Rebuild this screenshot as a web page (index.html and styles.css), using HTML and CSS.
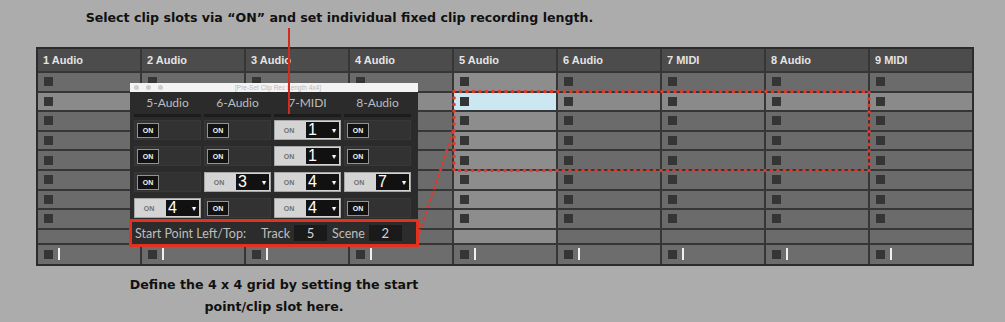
FILE: index.html
```html
<!DOCTYPE html>
<html lang="en">
<head>
    <meta charset="UTF-8">
    <meta name="viewport" content="width=device-width, initial-scale=1.0">
    <title>Pre-Set Clip Rec Length 4x4</title>
    <link rel="stylesheet" href="styles.css">
</head>
<body>
<div class="page">
    <p class="note note-top">Select clip slots via “ON” and set individual fixed clip recording length.</p>

    <div class="session">
        <div class="track">
            <div class="track-name">1 Audio</div>
            <div class="slot"><i></i></div>
            <div class="slot scene"><i></i></div>
            <div class="slot"><i></i></div>
            <div class="slot"><i></i></div>
            <div class="slot"><i></i></div>
            <div class="slot"><i></i></div>
            <div class="slot"><i></i></div>
            <div class="slot"><i></i></div>
            <div class="slot empty"></div>
            <div class="slot stop"><i></i><b></b></div>
        </div>
        <div class="track">
            <div class="track-name">2 Audio</div>
            <div class="slot"><i></i></div>
            <div class="slot scene"><i></i></div>
            <div class="slot"><i></i></div>
            <div class="slot"><i></i></div>
            <div class="slot"><i></i></div>
            <div class="slot"><i></i></div>
            <div class="slot"><i></i></div>
            <div class="slot"><i></i></div>
            <div class="slot empty"></div>
            <div class="slot stop"><i></i><b></b></div>
        </div>
        <div class="track">
            <div class="track-name">3 Audio</div>
            <div class="slot"><i></i></div>
            <div class="slot scene"><i></i></div>
            <div class="slot"><i></i></div>
            <div class="slot"><i></i></div>
            <div class="slot"><i></i></div>
            <div class="slot"><i></i></div>
            <div class="slot"><i></i></div>
            <div class="slot"><i></i></div>
            <div class="slot empty"></div>
            <div class="slot stop"><i></i><b></b></div>
        </div>
        <div class="track">
            <div class="track-name">4 Audio</div>
            <div class="slot"><i></i></div>
            <div class="slot scene"><i></i></div>
            <div class="slot"><i></i></div>
            <div class="slot"><i></i></div>
            <div class="slot"><i></i></div>
            <div class="slot"><i></i></div>
            <div class="slot"><i></i></div>
            <div class="slot"><i></i></div>
            <div class="slot empty"></div>
            <div class="slot stop"><i></i><b></b></div>
        </div>
        <div class="track selected">
            <div class="track-name">5 Audio</div>
            <div class="slot"><i></i></div>
            <div class="slot picked"><i></i></div>
            <div class="slot"><i></i></div>
            <div class="slot"><i></i></div>
            <div class="slot"><i></i></div>
            <div class="slot"><i></i></div>
            <div class="slot"><i></i></div>
            <div class="slot"><i></i></div>
            <div class="slot empty"></div>
            <div class="slot stop"><i></i><b></b></div>
        </div>
        <div class="track">
            <div class="track-name">6 Audio</div>
            <div class="slot"><i></i></div>
            <div class="slot scene"><i></i></div>
            <div class="slot"><i></i></div>
            <div class="slot"><i></i></div>
            <div class="slot"><i></i></div>
            <div class="slot"><i></i></div>
            <div class="slot"><i></i></div>
            <div class="slot"><i></i></div>
            <div class="slot empty"></div>
            <div class="slot stop"><i></i><b></b></div>
        </div>
        <div class="track">
            <div class="track-name">7 MIDI</div>
            <div class="slot"><i></i></div>
            <div class="slot scene"><i></i></div>
            <div class="slot"><i></i></div>
            <div class="slot"><i></i></div>
            <div class="slot"><i></i></div>
            <div class="slot"><i></i></div>
            <div class="slot"><i></i></div>
            <div class="slot"><i></i></div>
            <div class="slot empty"></div>
            <div class="slot stop"><i></i><b></b></div>
        </div>
        <div class="track">
            <div class="track-name">8 Audio</div>
            <div class="slot"><i></i></div>
            <div class="slot scene"><i></i></div>
            <div class="slot"><i></i></div>
            <div class="slot"><i></i></div>
            <div class="slot"><i></i></div>
            <div class="slot"><i></i></div>
            <div class="slot"><i></i></div>
            <div class="slot"><i></i></div>
            <div class="slot empty"></div>
            <div class="slot stop"><i></i><b></b></div>
        </div>
        <div class="track">
            <div class="track-name">9 MIDI</div>
            <div class="slot"><i></i></div>
            <div class="slot scene"><i></i></div>
            <div class="slot"><i></i></div>
            <div class="slot"><i></i></div>
            <div class="slot"><i></i></div>
            <div class="slot"><i></i></div>
            <div class="slot"><i></i></div>
            <div class="slot"><i></i></div>
            <div class="slot empty"></div>
            <div class="slot stop"><i></i><b></b></div>
        </div>
    </div>

    <p class="note note-bottom">Define the 4 x 4 grid by setting the start<br>point/clip slot here.</p>

    <!-- device window floating over the session view -->
    <div class="device">
        <div class="device-bar">
            <span class="lights"><i></i><i></i><i></i></span>
            <span class="device-title">[Pre-Set Clip Rec Length 4x4]</span>
        </div>
        <div class="device-body">
            <div class="lanes lane-names">
                <div>5-Audio</div>
                <div>6-Audio</div>
                <div>7-MIDI</div>
                <div>8-Audio</div>
            </div>
            <div class="lanes lane-rules">
                <div></div><div></div><div></div><div></div>
            </div>
            <div class="lanes cells">
                <div class="cell"><span class="on">ON</span></div>
                <div class="cell"><span class="on">ON</span></div>
                <div class="cell armed"><span class="on">ON</span><span class="len">1<em>▾</em></span></div>
                <div class="cell"><span class="on">ON</span></div>

                <div class="cell"><span class="on">ON</span></div>
                <div class="cell"><span class="on">ON</span></div>
                <div class="cell armed"><span class="on">ON</span><span class="len">1<em>▾</em></span></div>
                <div class="cell"><span class="on">ON</span></div>

                <div class="cell"><span class="on">ON</span></div>
                <div class="cell armed"><span class="on">ON</span><span class="len">3<em>▾</em></span></div>
                <div class="cell armed"><span class="on">ON</span><span class="len">4<em>▾</em></span></div>
                <div class="cell armed"><span class="on">ON</span><span class="len">7<em>▾</em></span></div>

                <div class="cell armed"><span class="on">ON</span><span class="len">4<em>▾</em></span></div>
                <div class="cell"><span class="on">ON</span></div>
                <div class="cell armed"><span class="on">ON</span><span class="len">4<em>▾</em></span></div>
                <div class="cell"><span class="on">ON</span></div>
            </div>
        </div>
        <div class="start">
            <span>Start Point Left/Top:</span>
            <span class="start-track">Track</span>
            <span class="num">5</span>
            <span class="start-scene">Scene</span>
            <span class="num">2</span>
        </div>
    </div>

    <!-- callout lines and the 4x4 target range -->
    <svg class="marks" width="1005" height="322" viewBox="0 0 1005 322">
        <line x1="289" y1="28" x2="289" y2="114" stroke="#d42a1e" stroke-width="2"/>
        <rect x="454" y="91.5" width="415" height="79" fill="none" stroke="#e0392a" stroke-width="3.6" stroke-linecap="round" stroke-dasharray="0 6.5"/>
        <line x1="420" y1="231" x2="453" y2="132" stroke="#e0392a" stroke-width="3.6" stroke-linecap="round" stroke-dasharray="0 6.5"/>
    </svg>
</div>
</body>
</html>
```

FILE: styles.css
```css
body {
    margin: 0;
    background-color: #acacac;
    font-family: "Lato", "Liberation Sans", sans-serif;
}
.page {
    position: relative;
    width: 1005px;
    height: 322px;
    overflow: hidden;
}
.note {
    margin: 0;
    font-family: "DejaVu Sans", sans-serif;
    font-weight: bold;
    font-size: 12.6px;
    color: #111;
    text-align: center;
}
.note-top {
    width: 679px;
    padding-top: 8px;
    line-height: 20px;
}
.note-bottom {
    width: 548px;
    margin-top: 8px;
    line-height: 22px;
}

/* session view */
.session {
    margin: 19px 0 0 36px;
    width: 938px;
    box-sizing: border-box;
    display: grid;
    grid-template-columns: repeat(9, 1fr);
    column-gap: 2px;
    background: #363636;
    border: 2px solid #2c2c2c;
}
.track {
    display: flex;
    flex-direction: column;
    gap: 2px;
}
.track-name {
    height: 22px;
    line-height: 22px;
    padding-left: 5px;
    background: #4c4c4c;
    color: #e4e4e4;
    font-family: "Liberation Sans", sans-serif;
    font-weight: bold;
    font-size: 11px;
}
.slot {
    height: 17.6px;
    background: #6b6b6b;
    display: flex;
    align-items: center;
    padding-left: 6px;
    gap: 5px;
}
.slot i {
    width: 9px;
    height: 9px;
    background: #353535;
}
.slot.scene {
    background: #8a8a8a;
}
.selected .slot {
    background: #8d8d8d;
}
.selected .slot.picked {
    background: #cbe7f1;
}
.slot.empty {
    height: 13px;
}
.slot.stop,
.selected .slot.stop {
    height: 19px;
    background: #6d6d6d;
}
.slot b {
    width: 2px;
    height: 12px;
    background: #f0f0f0;
}

/* device window */
.device {
    position: absolute;
    left: 130px;
    top: 83px;
    width: 288px;
    background: #2b2b2b;
}
.device-bar {
    height: 9px;
    background: #f3f3f3;
    position: relative;
    display: flex;
    align-items: center;
}
.lights {
    display: flex;
    gap: 7px;
    padding-left: 4px;
}
.lights i {
    width: 5px;
    height: 5px;
    border-radius: 50%;
    background: #cdcdcd;
}
.device-title {
    position: absolute;
    left: 0;
    right: 0;
    text-align: center;
    font-family: "Liberation Sans", sans-serif;
    font-size: 6.5px;
    color: #b9b9b9;
    padding-left: 8px;
}
.device-body {
    padding-bottom: 1px;
}
.lanes {
    display: grid;
    grid-template-columns: repeat(4, 1fr);
    column-gap: 3px;
    padding: 0 7px 0 4px;
}
.lane-names div {
    height: 22px;
    line-height: 22px;
    text-align: center;
    color: #bcbcbc;
    font-size: 12px;
}
.lane-rules div {
    height: 3px;
    background: #1c1c1c;
}
.cells {
    padding-top: 3px;
    row-gap: 6px;
}
.cell {
    height: 20px;
    box-sizing: border-box;
    background: #323232;
    border: 1px solid #383838;
    display: flex;
    align-items: center;
    padding: 0 2px;
}
.on {
    width: 22px;
    height: 15px;
    box-sizing: border-box;
    border: 1px solid #939393;
    background: #121212;
    color: #f2f2f2;
    font-family: "Liberation Sans", sans-serif;
    font-size: 7px;
    font-weight: bold;
    display: flex;
    align-items: center;
    justify-content: center;
}
.cell.armed {
    background: #d4d4d4;
    border-color: #a6a6a6;
    padding: 1px;
    gap: 4px;
}
.armed .on {
    width: 26px;
    height: 100%;
    border: none;
    background: transparent;
    color: #707070;
}
.len {
    flex: 1;
    height: 100%;
    background: #111;
    color: #fff;
    font-family: "Liberation Sans", sans-serif;
    font-size: 16px;
    display: flex;
    align-items: center;
    justify-content: space-between;
    padding: 0 3px 0 2px;
}
.len em {
    font-style: normal;
    font-family: "DejaVu Sans", sans-serif;
    font-size: 8px;
}
.start {
    height: 28px;
    box-sizing: border-box;
    margin: 0 -1px;
    border: 3px solid #e2311f;
    background: #2c2c2c;
    display: flex;
    align-items: center;
    padding-left: 3px;
    color: #bebebe;
    font-size: 12.5px;
}
.start-track {
    margin-left: 15px;
}
.start-scene {
    margin-left: 5px;
}
.num {
    width: 33px;
    height: 16px;
    line-height: 16px;
    margin-left: 4px;
    background: #1a1a1a;
    color: #d4d4d4;
    text-align: center;
    font-size: 13px;
}

/* overlays */
.marks {
    position: absolute;
    left: 0;
    top: 0;
    pointer-events: none;
}
```
